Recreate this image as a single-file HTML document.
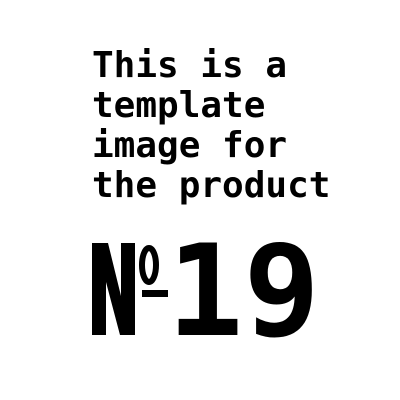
<!DOCTYPE html>
<html><head><style>html,body{margin:0;padding:0;background:#fff;width:400px;height:400px;overflow:hidden}</style></head>
<body>
<svg width="400" height="400" xmlns="http://www.w3.org/2000/svg" style="display:block">
<rect width="400" height="400" fill="#fff"/>
<g font-family="'DejaVu Sans Mono','Liberation Mono',monospace" font-weight="bold" fill="#000">
<text x="92" y="77" font-size="36">This is a</text>
<text x="92" y="117" font-size="36">template</text>
<text x="92" y="157" font-size="36">image for</text>
<text x="92" y="197" font-size="36">the product</text>
<text x="167" y="335" font-size="127">19</text>
</g>
<path d="M92 335V243H108L121 296V243H135V335H120L106 282V335Z" fill="#000"/>
<ellipse cx="149" cy="265" rx="7" ry="17" fill="none" stroke="#000" stroke-width="6"/>
<rect x="142" y="290" width="26" height="7" fill="#000"/>
</svg>
</body></html>
